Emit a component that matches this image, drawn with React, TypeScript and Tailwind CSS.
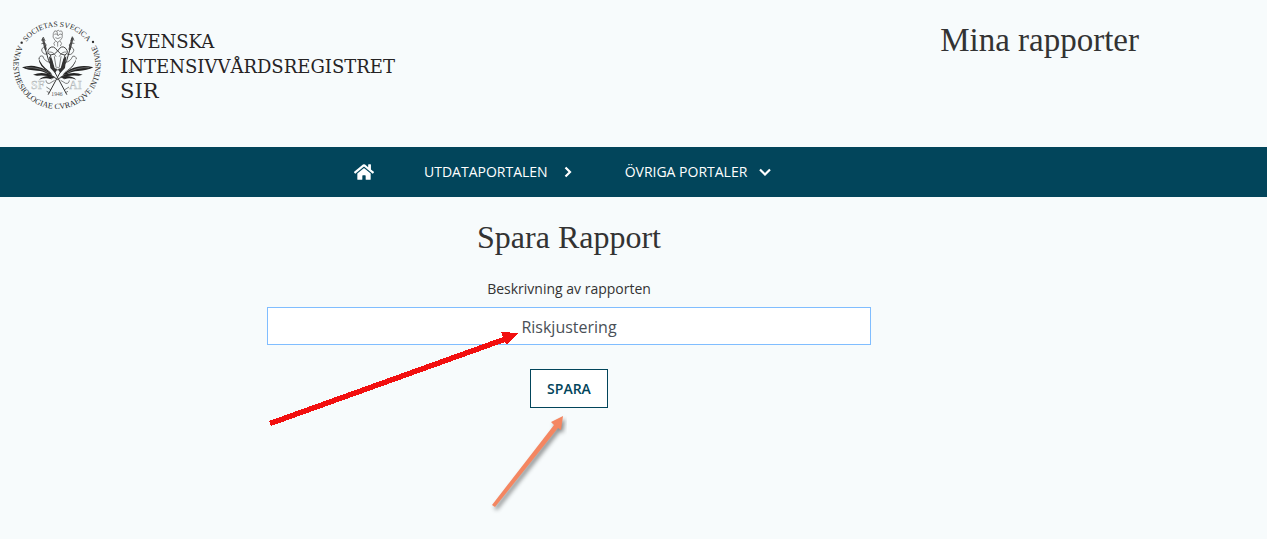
import { useState } from "react";
import { FaHome } from "react-icons/fa";

const Emblem = () => {
  return (
    <svg
      viewBox="36 32 270 270"
      className="h-[90px] w-[90px] shrink-0"
      role="img"
      aria-label="SFAI"
    >
      <defs>
        <path id="ring_top" d="M 56 167 A 115 115 0 0 1 286 167" />
        <path id="ring_bottom" d="M 86 68 A 131 131 0 1 0 256 68" />
      </defs>
      <g
        fill="#2a2a2a"
        fontFamily="'Liberation Serif', serif"
        textAnchor="middle"
      >
        <text fontSize="23">
          <textPath href="#ring_top" startOffset="50%">
            SOCIETAS SVECICA
          </textPath>
        </text>
        <text fontSize="24">
          <textPath href="#ring_bottom" startOffset="50%">
            ANAESTHESIOLOGIAE CVRAEQVE INTENSIVAE
          </textPath>
        </text>
        <circle cx="65" cy="100" r="3.5" />
        <circle cx="279" cy="98" r="3.5" />
        <text x="171" y="260" fontSize="17" fill="#555">
          1946
        </text>
      </g>
      <g
        fill="#f7fbfc"
        stroke="#b5b9ba"
        strokeWidth="1.5"
        fontFamily="'Liberation Serif', serif"
        fontSize="36"
      >
        <text x="93" y="238">SF</text>
        <text x="207" y="238">AI</text>
      </g>

      {/* poppy */}
      <g fill="none" stroke="#777" strokeWidth="2.5">
        <path d="M160 72 Q163 60 171 66 Q174 58 179 66 Q188 61 187 75 Q189 87 180 94 L173 99 L165 93 Q156 84 160 72Z" />
        <path d="M163 75 Q170 70 174 79 Q180 70 186 76 M166 85 Q173 91 182 84 M171 66 L173 78" />
        <path d="M173 98 L173 112 M166 96 Q158 101 164 109 M180 95 Q189 102 181 110" />
      </g>

      {/* staffs crossing behind the head */}
      <g fill="none" stroke="#333" strokeLinecap="round">
        <path strokeWidth="7" stroke="#555" d="M129 90 L137 119 M217 88 L209 119" />
        <path strokeWidth="3" d="M135 116 L146 154 L171 201 L200 255" />
        <path strokeWidth="3" d="M211 116 L200 154 L174 201 L145 255" />
        <path strokeWidth="2" d="M125 93 L130 83 L135 94 M213 94 L217 82 L222 93" />
        <path strokeWidth="2" d="M125 103 Q140 98 138 110 Q121 117 126 126 Q132 139 145 133" />
        <path strokeWidth="2" d="M222 102 Q207 98 208 110 Q226 118 220 127 Q214 140 201 134" />
        <path strokeWidth="2" d="M118 148 Q117 138 128 140 Q134 157 149 159 M229 148 Q227 138 218 141 Q211 157 198 159" />
      </g>

      {/* head with the coiled horns */}
      <g fill="none" stroke="#444" strokeWidth="3" strokeLinecap="round">
        <path d="M173 125 Q160 104 147 118 Q138 131 152 137 Q164 137 173 125 Q185 104 198 118 Q208 131 194 137 Q182 137 173 125" />
        <path strokeWidth="2" d="M148 128 Q160 126 168 141 M198 128 Q186 126 178 141" />
        <path d="M151 137 L160 176 Q173 187 186 176 L195 137" />
        <path strokeWidth="2" d="M163 142 L168 173 M183 142 L178 173 M167 177 Q173 170 179 177" />
      </g>
      <g fill="#333">
        <path d="M147 141 L156 149 L164 177 L171 182 L165 191 L151 176 Z" />
        <path d="M199 141 L190 149 L182 177 L175 182 L181 191 L195 176 Z" />
      </g>

      {/* poppy leaves */}
      <g fill="#222">
        <path d="M66 174 Q91 166 112 172 Q137 176 157 196 L146 196 Q129 184 112 184 Q84 184 66 174Z" />
        <path d="M280 174 Q255 167 233 172 Q208 176 188 196 L199 196 Q216 185 234 185 Q262 184 280 174Z" />
        <path d="M115 144 Q123 169 147 185 L157 194 L148 189 Q117 173 115 144Z" />
        <path d="M230 144 Q224 169 199 185 L187 194 L195 189 Q227 173 230 144Z" />
        <path d="M99 196 Q126 186 154 197 L165 204 Q133 196 111 199Z" />
        <path d="M248 196 Q221 186 192 197 L181 204 Q213 196 236 199Z" />
        <path d="M117 211 Q134 195 166 203 L151 209 Q137 204 117 211Z" />
        <path d="M229 211 Q212 195 180 203 L195 209 Q209 204 229 211Z" />
      </g>
      <g fill="none" stroke="#444" strokeWidth="2">
        <path d="M153 197 L172 211 L194 195 M154 210 Q163 198 173 212 Q184 198 193 210" />
        <path d="M138 213 Q139 224 149 222 L164 213 M208 213 Q207 224 197 222 L182 213" />
        <path d="M139 233 L153 242 M207 233 L193 242 M140 246 L148 250 M204 246 L196 250" />
        <path stroke="#eef3f4" strokeWidth="1" d="M78 175 Q117 173 146 191 M268 175 Q229 173 201 191" />
      </g>
    </svg>
  );
};

const Header = () => {
  return (
    <header className="flex h-[147px] max-w-[1139px] items-start justify-between pl-3 pt-5">
      <a href="#" className="flex items-start gap-[18px] text-[#262324]">
        <Emblem />
        <span className="flex flex-col pt-[9px] font-['DejaVu_Serif',serif] text-[18px] leading-[25px]">
          <span>
            <span className="text-[21px]">S</span>VENSKA
          </span>
          <span>
            <span className="text-[21px]">I</span>NTENSIVVÅRDSREGISTRET
          </span>
          <span className="text-[21px]">SIR</span>
        </span>
      </a>
      <h1 className="font-['Liberation_Serif',serif] text-[33px] leading-[40px]">
        Mina rapporter
      </h1>
    </header>
  );
};

const Nav = () => {
  return (
    <nav className="flex h-[50px] items-center bg-[#02455b] pl-[354px] text-sm text-white">
      <a href="#" aria-label="Hem">
        <FaHome className="size-5" />
      </a>
      <a href="#" className="ml-[50px] flex items-center gap-4">
        UTDATAPORTALEN
        <svg viewBox="0 0 8 12" className="h-3 w-2" aria-hidden="true">
          <path d="M1.5 1.5 L6 6 L1.5 10.5" fill="none" stroke="currentColor" strokeWidth="2.2" />
        </svg>
      </a>
      <a href="#" className="ml-[53px] flex items-center gap-3">
        ÖVRIGA PORTALER
        <svg viewBox="0 0 12 8" className="h-2 w-3" aria-hidden="true">
          <path d="M1 1.5 L6 6.5 L11 1.5" fill="none" stroke="currentColor" strokeWidth="2.2" />
        </svg>
      </a>
    </nav>
  );
};

const Save_form = () => {
  const [description, setdescription] = useState("Riskjustering");

  return (
    <form
      onSubmit={(e) => e.preventDefault()}
      className="relative mx-auto flex w-[604px] max-w-full flex-col items-center"
    >
      <h2 className="font-['Liberation_Serif',serif] text-[32px] leading-[40px]">
        Spara Rapport
      </h2>
      <label htmlFor="description" className="mt-[22px] text-sm">
        Beskrivning av rapporten
      </label>
      <input
        id="description"
        type="text"
        value={description}
        onChange={(e) => setdescription(e.target.value)}
        className="mt-2 h-[38px] w-full border border-[#80bdff] bg-white pt-[2px] text-center text-base text-[#495057] outline-none"
      />
      <button
        type="submit"
        className="mt-6 h-[39px] w-[78px] border border-[#02455b] bg-white text-sm font-semibold text-[#02455b]"
      >
        SPARA
      </button>

      {/* pointers drawn over the form */}
      <svg
        viewBox="0 0 300 200"
        className="pointer-events-none absolute left-0 top-[110px] h-[200px] w-[300px]"
        aria-hidden="true"
      >
        <g fill="#f20f0f" shapeRendering="crispEdges">
          <path d="M2 94 L236 10 L234 5 L251 6 L240 18 L238 15 L4 99 Z" />
        </g>
        <g fill="#f48661" className="drop-shadow-[2px_3px_2px_rgba(0,0,0,0.45)]">
          <path d="M225 178 L287 98 L284 95 L296 89 L294 103 L291 101 L228 180 Z" />
        </g>
      </svg>
    </form>
  );
};

export default function App() {
  return (
    <div className="min-h-screen bg-[#f7fbfc] font-['Open_Sans',sans-serif] text-[#333]">
      <Header />
      <Nav />
      <main className="max-w-[1138px] pt-5">
        <Save_form />
      </main>
    </div>
  );
}
